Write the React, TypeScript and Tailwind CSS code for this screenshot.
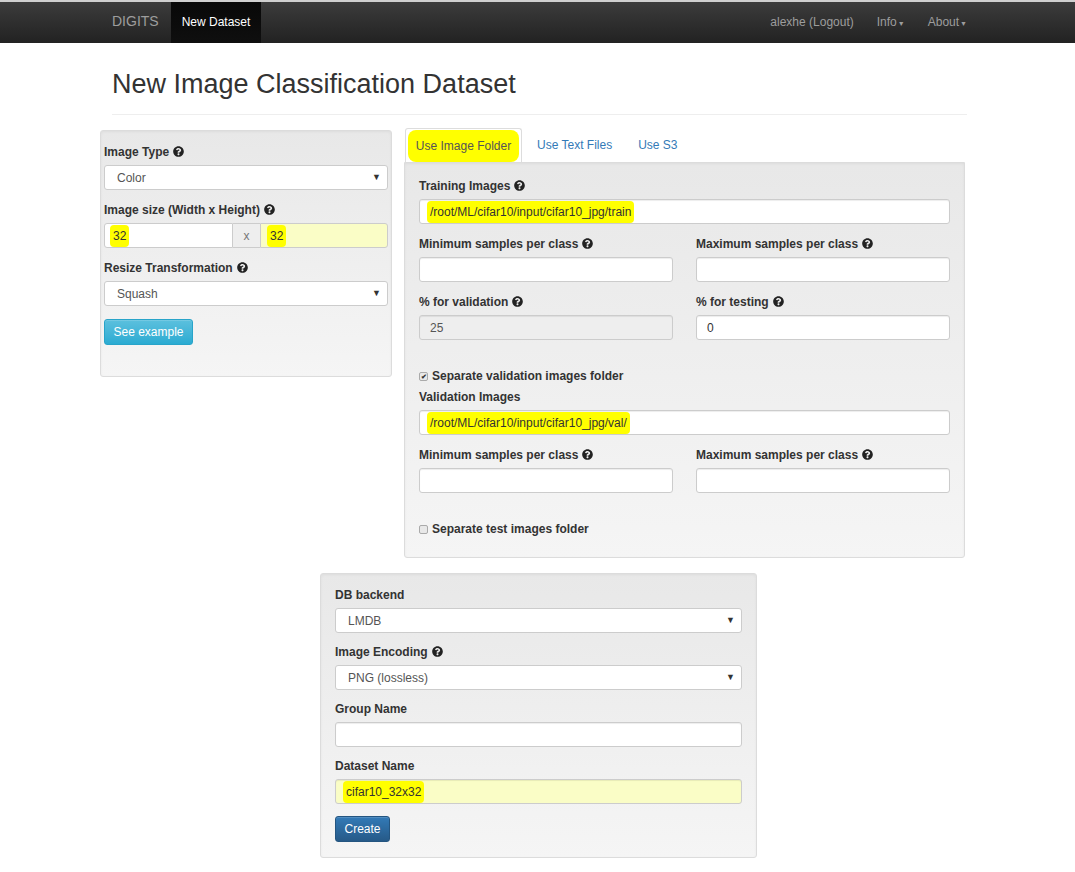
import { ReactElement, ReactNode } from "react";
import { FaQuestionCircle } from "react-icons/fa";

const font = { fontFamily: '"Liberation Sans", Arial, sans-serif' };

const Help = () => <FaQuestionCircle className="inline-block ml-[4px] -mt-[2px] text-[#222]" size={11} />;

const Mark = ({ children }: { children: ReactNode }) => (
  <span className="bg-[#ffff00] rounded-[4px] px-[3px] -mx-[3px] py-[2px]">{children}</span>
);

const Label = ({ children, help }: { children: ReactNode; help?: boolean }) => (
  <div className="text-[12px] leading-[17px] font-bold text-[#333] mb-[4px]">
    {children}
    {help && <Help />}
  </div>
);

const Input = ({ value, disabled, yellow }: { value?: ReactNode; disabled?: boolean; yellow?: boolean }) => (
  <div
    className={`h-[25px] border border-[#ccc] rounded-[3px] shadow-[inset_0_1px_1px_rgba(0,0,0,0.075)] flex items-center px-[10px] text-[12px] ${
      disabled ? "bg-[#eee] text-[#555]" : yellow ? "bg-[#fafdc6] text-[#333]" : "bg-white text-[#333]"
    }`}
  >
    {value}
  </div>
);

const Select = ({ value }: { value: string }) => (
  <div className="h-[25px] border border-[#ccc] rounded-[3px] bg-white flex items-center justify-between pl-[12px] pr-[6px] text-[12px] text-[#555]">
    <span>{value}</span>
    <span className="text-[9px] text-[#333]">▼</span>
  </div>
);

const Group = ({ children, last, tight }: { children: ReactNode; last?: boolean; tight?: boolean }) => (
  <div className={last ? "" : tight ? "mb-[11px]" : "mb-[12px]"}>{children}</div>
);

const Check = ({ checked, label }: { checked?: boolean; label: string }) => (
  <div className="flex items-center text-[12px] leading-[17px] font-bold text-[#333]">
    <span className="w-[9px] h-[9px] border border-[#aaa] rounded-[2px] bg-[#e8e8e8] mr-[4px] flex items-center justify-center text-[7px] leading-none text-[#333]">
      {checked ? "✔" : ""}
    </span>
    {label}
  </div>
);

const wellCls =
  "border border-[#dcdcdc] rounded-[3px] bg-gradient-to-b from-[#e8e8e8] to-[#f5f5f5] shadow-[inset_0_1px_3px_rgba(0,0,0,0.05),0_1px_0_rgba(255,255,255,0.1)]";

export default function App(): ReactElement {
  return (
    <div className="min-h-[872px] bg-white text-[#333]" style={font}>
      {/* Navbar */}
      <div className="border-t-[2px] border-[#cfcfcf] h-[43px] bg-gradient-to-b from-[#3c3c3c] to-[#222] flex items-stretch text-[12px]">
        <div className="ml-[100px] flex items-stretch">
          <div className="flex items-center pb-[2px] px-[12px] text-[14px] text-[#9d9d9d]">DIGITS</div>
          <div className="flex items-center pb-[2px] px-[11px] bg-gradient-to-b from-[#080808] to-[#0f0f0f] text-white w-[90px] whitespace-nowrap">
            New Dataset
          </div>
        </div>
        <div className="ml-auto mr-[108px] pb-[2px] flex items-center text-[#9d9d9d] whitespace-nowrap">
          <span>alexhe (Logout)</span>
          <span className="ml-[23px]">
            Info<span className="text-[7px] ml-[1px]">▼</span>
          </span>
          <span className="ml-[23px]">
            About<span className="text-[7px] ml-[1px]">▼</span>
          </span>
        </div>
      </div>

      <div className="ml-[100px] w-[865px]">
        {/* Header */}
        <div className="pl-[12px]">
          <h1 className="text-[27px] leading-[29px] mt-[27px] text-[#333]">New Image Classification Dataset</h1>
          <div className="mt-[15px] border-t border-[#eee] w-[855px]" />
        </div>

        <div className="flex gap-[12px] mt-[13px]">
          {/* Left panel */}
          <div className="w-[292px] self-start mt-[2px]">
            <div className={`${wellCls} h-[247px] px-[3px] pt-[13px]`}>
              <Group>
                <Label help>Image Type</Label>
                <Select value="Color" />
              </Group>
              <Group>
                <Label help>Image size (Width x Height)</Label>
                <div className="flex h-[25px] text-[12px]">
                  <div className="w-[129px] border border-[#ccc] rounded-l-[3px] bg-white flex items-center pl-[8px]">
                    <Mark>32</Mark>
                  </div>
                  <div className="w-[27px] border-y border-[#ccc] bg-[#eee] flex items-center justify-center text-[#777]">x</div>
                  <div className="flex-1 border border-[#ccc] rounded-r-[3px] bg-[#fafdc6] flex items-center pl-[9px]">
                    <Mark>32</Mark>
                  </div>
                </div>
              </Group>
              <Group>
                <Label help>Resize Transformation</Label>
                <Select value="Squash" />
              </Group>
              <button className="mt-[1px] h-[26px] w-[89px] rounded-[3px] border border-[#28a4c9] bg-gradient-to-b from-[#5bc0de] to-[#2aabd2] text-white text-[12px] shadow-[inset_0_1px_0_rgba(255,255,255,0.15)]">
                See example
              </button>
            </div>
          </div>

          {/* Right panel */}
          <div className="w-[561px]">
            <div className="flex h-[34px] items-stretch text-[12px]">
              <div className="ml-[1px] w-[117px] border border-b-0 border-[#ddd] rounded-t-[3px] bg-white flex items-center justify-center text-[#555]">
                <span className="bg-[#ffff00] rounded-[8px] px-[8px] py-[7px]">Use Image Folder</span>
              </div>
              <div className="flex items-center px-[15px] text-[#337ab7]">Use Text Files</div>
              <div className="flex items-center px-[11px] text-[#337ab7]">Use S3</div>
            </div>
            <div className={`${wellCls} rounded-t-none px-[14px] pt-[15px] pb-[19px]`}>
              <Group>
                <Label help>Training Images</Label>
                <Input value={<Mark>/root/ML/cifar10/input/cifar10_jpg/train</Mark>} />
              </Group>
              <div className="grid grid-cols-2 gap-x-[23px]">
                <Group>
                  <Label help>Minimum samples per class</Label>
                  <Input />
                </Group>
                <Group>
                  <Label help>Maximum samples per class</Label>
                  <Input />
                </Group>
                <Group last>
                  <Label help>% for validation</Label>
                  <Input value="25" disabled />
                </Group>
                <Group last>
                  <Label help>% for testing</Label>
                  <Input value="0" />
                </Group>
              </div>
              <div className="mt-[28px]">
                <Check checked label="Separate validation images folder" />
              </div>
              <div className="mt-[4px]">
                <Group>
                  <Label>Validation Images</Label>
                  <Input value={<Mark>/root/ML/cifar10/input/cifar10_jpg/val/</Mark>} />
                </Group>
              </div>
              <div className="grid grid-cols-2 gap-x-[23px]">
                <Group last>
                  <Label help>Minimum samples per class</Label>
                  <Input />
                </Group>
                <Group last>
                  <Label help>Maximum samples per class</Label>
                  <Input />
                </Group>
              </div>
              <div className="mt-[28px]">
                <Check label="Separate test images folder" />
              </div>
            </div>
          </div>
        </div>

        {/* Bottom panel */}
        <div className={`${wellCls} ml-[220px] w-[437px] mt-[15px] px-[14px] pt-[13px] pb-[15px]`}>
          <Group tight>
            <Label>DB backend</Label>
            <Select value="LMDB" />
          </Group>
          <Group tight>
            <Label help>Image Encoding</Label>
            <Select value="PNG (lossless)" />
          </Group>
          <Group tight>
            <Label>Group Name</Label>
            <Input />
          </Group>
          <Group tight>
            <Label>Dataset Name</Label>
            <Input yellow value={<Mark>cifar10_32x32</Mark>} />
          </Group>
          <button className="mt-[1px] h-[26px] w-[55px] rounded-[3px] border border-[#245580] bg-gradient-to-b from-[#337ab7] to-[#265a88] text-white text-[12px] shadow-[inset_0_1px_0_rgba(255,255,255,0.15)]">
            Create
          </button>
        </div>
      </div>
    </div>
  );
}
